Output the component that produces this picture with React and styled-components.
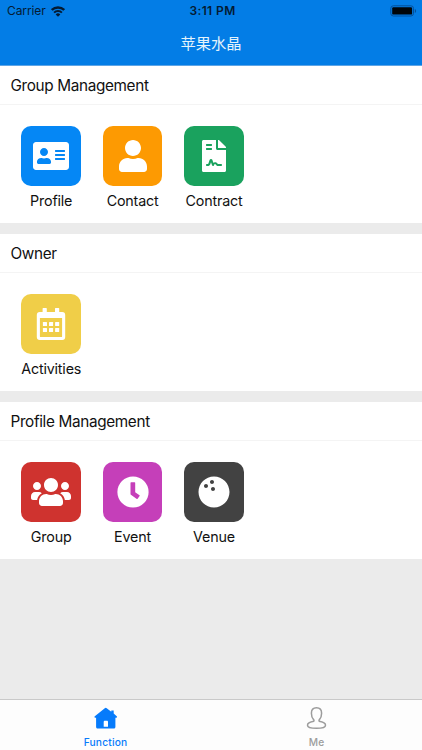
import React from 'react';
import styled, { createGlobalStyle } from 'styled-components';
import {
  FaAddressCard,
  FaUser,
  FaFileContract,
  FaUsers,
  FaBowlingBall,
} from 'react-icons/fa';

const GlobalStyle = createGlobalStyle`
  * {
    box-sizing: border-box;
  }

  body {
    margin: 0;
    font-family: Inter, "Noto Sans CJK SC", sans-serif;
    color: #111;
  }
`;

const Screen = styled.div`
  display: flex;
  flex-direction: column;
  width: 422px;
  height: 750px;
  overflow: hidden;
  background-color: #ebebeb;
`;

const Header = styled.header`
  flex: none;
  height: 65.5px;
  background-color: #037de6;
  border-bottom: 1px solid #5ea5e6;
`;

const StatusBar = styled.div`
  display: grid;
  grid-template-columns: 1fr auto 1fr;
  align-items: center;
  height: 22px;
  padding: 0 5px 0 7px;
  font-size: 12px;
  line-height: 22px;
  color: #041b33;
`;

const Carrier = styled.div`
  display: flex;
  align-items: center;
  gap: 5px;
  letter-spacing: -0.1px;
`;

const Time = styled.div`
  padding-left: 1px;
  font-weight: 600;
  letter-spacing: 0.4px;
`;

const Battery = styled.svg`
  justify-self: end;
`;

const Title = styled.h1`
  margin: 0;
  font-size: 15.3px;
  font-weight: 400;
  line-height: 43px;
  text-align: center;
  color: #e4f3fb;
`;

const Sections = styled.main`
  display: flex;
  flex: 1;
  flex-direction: column;
  gap: 10.25px;
`;

const Section = styled.section`
  height: 157.75px;
  background-color: #fff;
`;

const SectionTitle = styled.h2`
  height: 39.25px;
  margin: 0;
  padding-left: 10.5px;
  border-bottom: 1px solid #f4f4f4;
  font-size: 15.3px;
  font-weight: 400;
  line-height: 40.5px;
  letter-spacing: -0.34px;
`;

const Items = styled.div`
  display: flex;
  padding: 21.5px 10.5px 0;
`;

const Item = styled.div`
  display: flex;
  flex-direction: column;
  align-items: center;
  width: 81.4px;
`;

const Tile = styled.div`
  display: flex;
  align-items: center;
  justify-content: center;
  width: 59.6px;
  height: 59.6px;
  border-radius: 10px;
  color: #fff;
  background-color: ${({ $color }) => $color};
`;

const Label = styled.span`
  margin-top: 4.7px;
  font-size: 14.3px;
  line-height: 20px;
  letter-spacing: -0.17px;
  white-space: nowrap;
`;

const TabBar = styled.nav`
  display: flex;
  flex: none;
  height: 51px;
  border-top: 1px solid #c9c9c9;
  background-color: #fdfdfd;
`;

const Tab = styled.div`
  display: flex;
  flex: 1;
  flex-direction: column;
  align-items: center;
  padding-top: 6px;
  color: ${({ $active }) => ($active ? '#067bfb' : '#9c9c9c')};
`;

const TabLabel = styled.span`
  margin-top: 6px;
  font-size: 10.2px;
  font-weight: 500;
  line-height: 13px;
  letter-spacing: 0.2px;
`;

const WifiIcon = () => (
  <svg width="14" height="11" viewBox="0 0 14 11" fill="none" stroke="currentColor">
    <path d="M0.8 4a8.8 8.8 0 0 1 12.4 0" strokeWidth="2.4" />
    <path d="M3.1 6.6a5.5 5.5 0 0 1 7.8 0" strokeWidth="2" />
    <path d="M7 10.7 4.7 8.4a3.3 3.3 0 0 1 4.6 0z" fill="currentColor" stroke="none" />
  </svg>
);

const BatteryIcon = () => (
  <Battery width="27" height="12" viewBox="0 0 27 12">
    <rect x="0.8" y="0.8" width="22.7" height="10.2" rx="2.6" fill="none" stroke="#04509a" />
    <rect x="2.2" y="2.2" width="19.9" height="7.4" rx="1.2" fill="#000509" />
    <path d="M24.8 4v4c1.8-.6 1.8-3.4 0-4z" fill="#04509a" />
  </Battery>
);

const CalendarIcon = ({ size }) => (
  <svg width={size} height={size} viewBox="0 0 32 32" fill="currentColor">
    <path d="M8.2 0h3a.6.6 0 0 1 .6.6V4h8.2V.6a.6.6 0 0 1 .6-.6h3a.6.6 0 0 1 .6.6V4h3a3 3 0 0 1 3 3v22a3 3 0 0 1-3 3H4.8a3 3 0 0 1-3-3V7a3 3 0 0 1 3-3h2.8V.6a.6.6 0 0 1 .6-.6zM4.9 10v18.4c0 .3.3.6.6.6h21c.3 0 .6-.3.6-.6V10z" fillRule="evenodd" />
    {[14, 20].map((y) =>
      [7.9, 14, 20.1].map((x) => (
        <rect key={`${x}-${y}`} x={x} y={y} width="4.1" height="4.1" rx="0.5" />
      ))
    )}
  </svg>
);

const ClockIcon = ({ size, color }) => (
  <svg width={size} height={size} viewBox="0 0 32 32">
    <circle cx="16" cy="16" r="15.6" fill="currentColor" />
    <path d="M14.1 6.2h3.5a.6.6 0 0 1 .6.6v9.4l4.3 3.1c.3.2.3.5.1.8l-2 2.7c-.2.3-.6.4-.8.2l-5.9-4.3a.9.9 0 0 1-.4-.7V6.8c0-.3.3-.6.6-.6z" fill={color} />
  </svg>
);

const HomeIcon = () => (
  <svg width="24" height="24" viewBox="0 0 24 24" fill="currentColor">
    <path d="M10.8 2.2a1.5 1.5 0 0 1 1.9 0L17.3 5.7V4.5h2.4v3l3 2.8c.7.6.4 1.5-.5 1.5h-.8v9.3c0 .9-.6 1.5-1.5 1.5H3.6c-.9 0-1.5-.6-1.5-1.5v-9.3h-.8c-.9 0-1.2-.9-.5-1.5z" />
    <path d="M9.7 20.7v-4.8c0-.7.5-1.1 1.1-1.1h2.1c.7 0 1.1.4 1.1 1.1v4.8z" fill="#fff" />
  </svg>
);

const MeIcon = () => (
  <svg width="24" height="24" viewBox="0 0 24 24" fill="none" stroke="currentColor" strokeWidth="1.5">
    <path d="M11.5 1.8c-3.2 0-5.1 2.3-5.1 5.4 0 2.9.8 5 2.2 6.4.8.9.4 1.8-.8 2-3.1.6-5.3 1.8-5.3 3.6 0 2 3.7 3.1 9 3.1s9-1.1 9-3.1c0-1.8-2.2-3-5.3-3.6-1.2-.2-1.6-1.1-.8-2 1.4-1.4 2.2-3.5 2.2-6.4 0-3.1-1.9-5.4-5.1-5.4z" />
  </svg>
);

const sections = [
  {
    title: 'Group Management',
    items: [
      { label: 'Profile', color: '#0587f5', icon: FaAddressCard, size: 36 },
      { label: 'Contact', color: '#fd9a02', icon: FaUser, size: 32 },
      { label: 'Contract', color: '#1aa25e', icon: FaFileContract, size: 32 },
    ],
  },
  {
    title: 'Owner',
    items: [
      { label: 'Activities', color: '#f0ce48', icon: CalendarIcon, size: 32 },
    ],
  },
  {
    title: 'Profile Management',
    items: [
      { label: 'Group', color: '#cf332f', icon: FaUsers, size: 40 },
      { label: 'Event', color: '#c53fb9', icon: ClockIcon, size: 32 },
      { label: 'Venue', color: '#424242', icon: FaBowlingBall, size: 32 },
    ],
  },
];

export default function App() {
  return (
    <Screen>
      <GlobalStyle />
      <Header>
        <StatusBar>
          <Carrier>
            Carrier
            <WifiIcon />
          </Carrier>
          <Time>3:11 PM</Time>
          <BatteryIcon />
        </StatusBar>
        <Title>苹果水晶</Title>
      </Header>
      <Sections>
        {sections.map(({ title, items }) => (
          <Section key={title}>
            <SectionTitle>{title}</SectionTitle>
            <Items>
              {items.map(({ label, color, icon: Icon, size }) => (
                <Item key={label}>
                  <Tile $color={color}>
                    {Icon === ClockIcon ? <ClockIcon size={size} color={color} /> : <Icon size={size} />}
                  </Tile>
                  <Label>{label}</Label>
                </Item>
              ))}
            </Items>
          </Section>
        ))}
      </Sections>
      <TabBar>
        <Tab $active>
          <HomeIcon />
          <TabLabel>Function</TabLabel>
        </Tab>
        <Tab>
          <MeIcon />
          <TabLabel>Me</TabLabel>
        </Tab>
      </TabBar>
    </Screen>
  );
}
